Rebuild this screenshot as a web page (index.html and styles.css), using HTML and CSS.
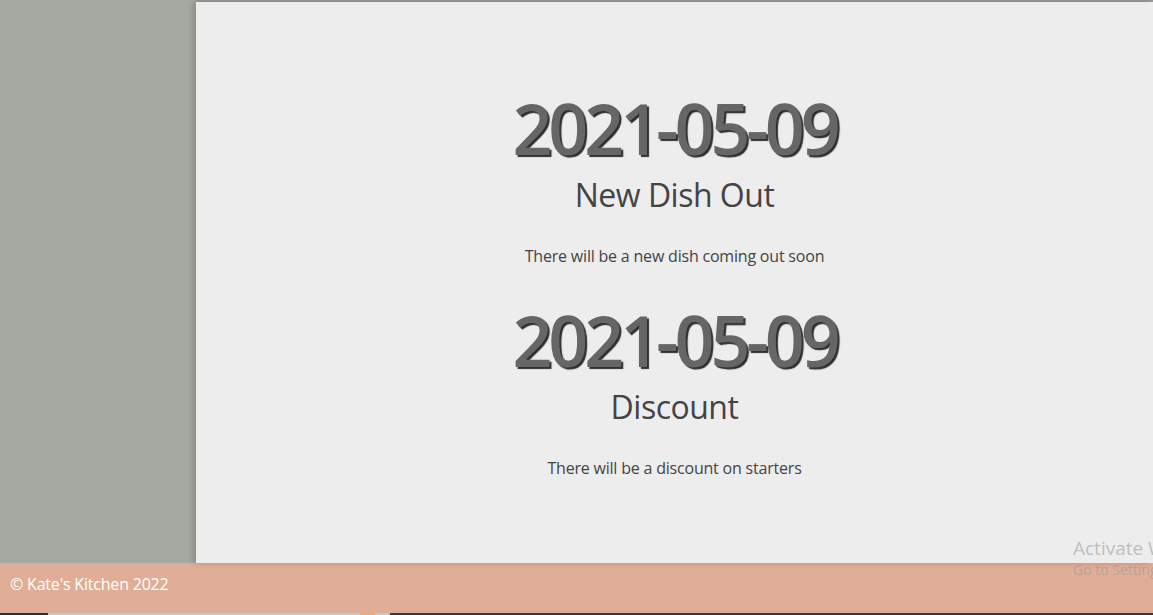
FILE: index.html
```html
<!DOCTYPE html>
<html lang="en">
<head>
<meta charset="utf-8">
<title>Kate's Kitchen - News</title>
<link rel="stylesheet" href="styles.css">
</head>
<body>
<div class="page">
  <div class="topline"></div>
  <div class="layout">
    <aside class="sidebar"></aside>
    <main class="main">
      <section class="event">
        <h1 class="date">2021-05-09</h1>
        <h2 class="title">New Dish Out</h2>
        <p class="desc">There will be a new dish coming out soon</p>
      </section>
      <section class="event">
        <h1 class="date">2021-05-09</h1>
        <h2 class="title">Discount</h2>
        <p class="desc">There will be a discount on starters</p>
      </section>
    </main>
  </div>
  <footer class="footer">© Kate's Kitchen 2022</footer>
  <div class="taskbar">
    <span class="tb tb-dark1"></span>
    <span class="tb tb-light"></span>
    <span class="tb tb-orange"></span>
    <span class="tb tb-light2"></span>
    <span class="tb tb-dark2"></span>
  </div>
  <div class="watermark">
    <div class="wm-title">Activate Windows</div>
    <div class="wm-sub">Go to Settings to activate Windows.</div>
  </div>
</div>
</body>
</html>
```
FILE: styles.css
```css
html, body {
  margin: 0;
  padding: 0;
  height: 615px;
  overflow: hidden;
}
body {
  font-family: "Open Sans", "Noto Sans", sans-serif;
  background: #a6a9a1;
}
.page {
  position: relative;
  width: 1153px;
  height: 615px;
  display: flex;
  flex-direction: column;
  overflow: hidden;
}
.topline {
  height: 2px;
  margin-left: 196px;
  background: #9b9c97;
}
.layout {
  display: flex;
  height: 561px;
}
.sidebar {
  width: 196px;
  flex: 0 0 196px;
  background: #a6a9a1;
}
.main {
  flex: 1;
  position: relative;
  z-index: 1;
  background: #ededed;
  box-shadow: -3px 0 6px rgba(0, 0, 0, 0.18);
  padding-top: 91px;
  text-align: center;
  color: #444;
}
.event {
  margin: 0 0 41px;
}
.date {
  margin: 0;
  font-size: 70px;
  line-height: 1;
  font-weight: 600;
  letter-spacing: -4.1px;
  color: #666;
  text-shadow: 2px 2px 1px #2e2e2e;
}
.title {
  margin: 16px 0 0;
  font-size: 32px;
  line-height: 1;
  font-weight: 500;
  letter-spacing: -0.5px;
  color: #444;
}
.desc {
  margin: 37px 0 0;
  font-size: 16px;
  line-height: 1;
  letter-spacing: -0.2px;
  color: #444;
}
.footer {
  height: 50px;
  box-sizing: border-box;
  background: #e0ae97;
  color: #fff;
  font-size: 16px;
  letter-spacing: -0.2px;
  display: flex;
  align-items: center;
  padding: 0 0 8px 10px;
}
.taskbar {
  height: 2px;
  display: flex;
}
.tb { display: block; height: 2px; }
.tb-dark1 { width: 48px; background: #263238; }
.tb-light { width: 312px; background: #c6c8c2; }
.tb-orange { width: 15px; background: #f0a878; }
.tb-light2 { width: 15px; background: #c6c8c2; }
.tb-dark2 { flex: 1; background: #2c3a3a; }
.watermark {
  position: absolute;
  left: 1073px;
  top: 536px;
  z-index: 5;
  white-space: nowrap;
  color: rgba(150, 150, 150, 0.55);
  font-family: "Open Sans", sans-serif;
}
.wm-title {
  font-size: 19px;
  line-height: 24px;
}
.wm-sub {
  font-size: 14px;
  line-height: 20px;
}
```
